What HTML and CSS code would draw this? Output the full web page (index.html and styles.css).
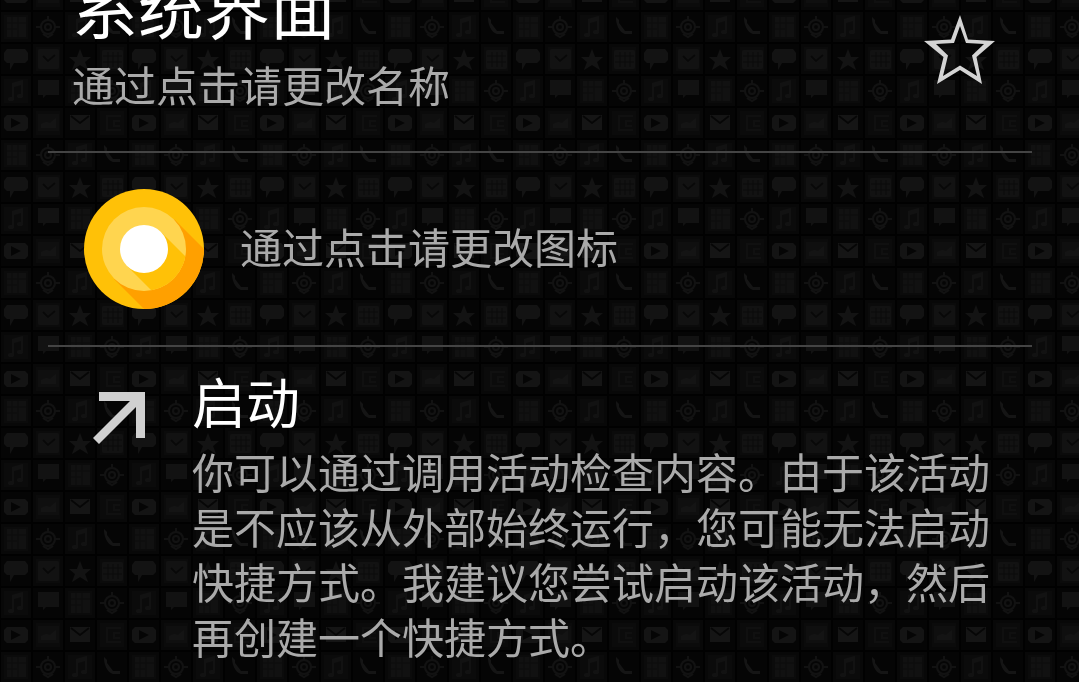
FILE: index.html
```html
<!DOCTYPE html>
<html lang="zh-CN">
<head>
<meta charset="utf-8">
<title>系统界面</title>
<link rel="stylesheet" href="styles.css">
</head>
<body>
<svg class="wallpaper" aria-hidden="true">
  <defs>
    <g id="cell"><rect x="1" y="1" width="30" height="30" fill="#080808"/><rect x="4" y="4" width="24" height="24" fill="#0b0b0b"/></g>
    <g id="dim"><rect x="1" y="1" width="30" height="30" fill="#050505"/></g>
    <g id="note" fill="#121212"><path d="M12 8l11-3v15h-2V10l-7 2v12h-2z"/><ellipse cx="11" cy="24" rx="3" ry="2"/><ellipse cx="20" cy="21" rx="3" ry="2"/></g>
    <g id="target" fill="none" stroke="#121212" stroke-width="2"><circle cx="16" cy="16" r="7"/><circle cx="16" cy="16" r="3"/><path d="M4 16h5M23 16h5M16 5v4M11 23l5 3 5-3"/></g>
    <g id="sheet"><rect x="7" y="6" width="19" height="20" fill="#111"/><path d="M7 12h19M7 18h10M12 6v20M18 6v20" stroke="#0b0b0b"/></g>
    <pattern id="tiles" width="128" height="128" y="43" patternUnits="userSpaceOnUse">
      <rect width="128" height="128" fill="#010101"/>
      <use href="#dim"/><path d="M7 6h18l3 4v7l-3 3H14l-4 7v-7H7l-3-3v-7z" fill="#131313"/>
      <use href="#cell" x="32"/><rect x="38" y="6" width="21" height="20" rx="2" fill="#121212"/><path d="M43 13l5 5 7-6" fill="none" stroke="#080808" stroke-width="2"/>
      <use href="#dim" x="64"/><path d="M80 6l3 8h8l-6 5 3 8-8-5-8 5 3-8-6-5h8z" fill="#131313"/>
      <use href="#cell" x="96"/><rect x="102" y="7" width="21" height="19" rx="2" fill="#121212"/><path d="M103 13h19M103 19h19M108 9v15M113 9v15M118 9v15" stroke="#0a0a0a"/>
      <use href="#cell" y="32"/><use href="#note" y="32"/>
      <use href="#dim" x="32" y="32"/><path d="M38 37h21v15H46l-3 3v-3h-5z" fill="#121212"/>
      <use href="#cell" x="64" y="32"/><use href="#sheet" x="64" y="32"/>
      <use href="#dim" x="96" y="32"/><use href="#target" x="96" y="32"/>
      <use href="#dim" y="64"/><path fill-rule="evenodd" d="M7 72h18l3 3v10l-3 3H7l-3-3V75zM11 75v10l10-5z" fill="#141414"/>
      <use href="#cell" x="32" y="64"/><path d="M38 71h21v17H38z" fill="#0f0f0f"/><path d="M41 85v-4l5-2 4 1 6-5v10z" fill="#141414"/>
      <use href="#dim" x="64" y="64"/><path d="M70 72h20v15H70z" fill="#151515"/><path d="M71 73l9 7 9-7" fill="none" stroke="#060606" stroke-width="2"/>
      <use href="#cell" x="96" y="64"/><path d="M121 73h-14v14h14M120 78h-6v5h6" fill="none" stroke="#101010" stroke-width="2"/>
      <use href="#cell" y="96"/><use href="#sheet" y="96"/>
      <use href="#dim" x="32" y="96"/><use href="#target" x="32" y="96"/>
      <use href="#cell" x="64" y="96"/><use href="#note" x="64" y="96"/>
      <use href="#dim" x="96" y="96"/><path d="M104 102l3 3v3l6 8h7v3h-7c-6-2-9-9-9-17z" fill="#151515"/>
    </pattern>
  </defs>
  <rect width="100%" height="100%" fill="url(#tiles)"/>
</svg>
<main class="page">
  <header class="row header">
    <button class="name" type="button">
      <span class="title">系统界面</span>
      <span class="hint">通过点击请更改名称</span>
    </button>
    <button class="star" type="button" aria-label="收藏">
      <svg width="72" height="72" viewBox="0 0 72 72" fill="#d4d4d4" fill-rule="evenodd"><path d="M36 1l8 24.500 27 1.500-18.500 16L58 70 36 56 13 70l6.500-27L0 27l27-1.500zM36 12l-6 17-18 1 12 11.500L19 62l17-10.500L53 62l-5-20.500L60 30l-18-1z"/></svg>
    </button>
  </header>
  <button class="row icon-row" type="button">
    <svg width="120" height="120" viewBox="0 0 120 120" aria-hidden="true">
      <defs><clipPath id="disc"><circle cx="60" cy="60" r="60"/></clipPath><clipPath id="ring"><circle cx="60" cy="60" r="42"/></clipPath></defs>
      <circle cx="60" cy="60" r="60" fill="#ffc107"/>
      <path d="M90 30l60 60-60 60-60-60z" fill="#ffa000" clip-path="url(#disc)"/>
      <circle cx="60" cy="60" r="42" fill="#ffd54f"/>
      <path d="M77 43l60 60-34 34-60-60z" fill="#ffc107" clip-path="url(#ring)"/>
      <circle cx="60" cy="60" r="24" fill="#fff"/>
    </svg>
    <span class="hint">通过点击请更改图标</span>
  </button>
  <button class="row launch" type="button">
    <svg class="arrow" width="52" height="52" viewBox="0 0 52 52" fill="#d0d0d0" aria-hidden="true"><path d="M6 0h46v46h-9V15L6 52 0 46 37 9H6z"/></svg>
    <span class="launch-text">
      <span class="subtitle">启动</span>
      <span class="hint">你可以通过调用活动检查内容。由于该活动是不应该从外部始终运行，您可能无法启动快捷方式。我建议您尝试启动该活动，然后再创建一个快捷方式。</span>
    </span>
  </button>
</main>
</body>
</html>
```
FILE: styles.css
```css
* {
  box-sizing: border-box;
}

body {
  margin: 0;
  background: #030303;
  color: #fff;
  font-family: "Noto Sans CJK SC", sans-serif;
  font-weight: 400;
  overflow: hidden;
}

.wallpaper {
  position: fixed;
  inset: 0;
  width: 100%;
  height: 100%;
  z-index: -1;
}

button {
  padding: 0;
  border: 0;
  background: none;
  color: inherit;
  font: inherit;
  text-align: left;
  cursor: pointer;
}

.page {
  display: flex;
  flex-direction: column;
  padding: 0 47px 0 48px;
}

.row {
  display: flex;
  width: 100%;
}

.header {
  justify-content: space-between;
  align-items: flex-start;
  margin-top: -28px;
  padding: 0 36px 40px 24px;
  border-bottom: 2px solid #444;
}

.name,
.launch-text {
  display: flex;
  flex-direction: column;
}

.title {
  font-size: 66px;
  line-height: 66px;
  margin-bottom: 18px;
}

.hint {
  color: #aaa;
  font-size: 42px;
  line-height: 55px;
}

.star {
  margin-top: 42px;
}

.star svg {
  display: block;
}

.icon-row {
  align-items: center;
  gap: 36px;
  padding: 36px;
  border-bottom: 2px solid #444;
}

.icon-row .hint {
  padding-bottom: 8px;
}

.launch {
  align-items: flex-start;
  gap: 47px;
  padding: 20px 36px 16px 45px;
}

.arrow {
  flex: none;
  margin-top: 25px;
}

.subtitle {
  font-size: 54px;
  line-height: 68px;
  margin-bottom: 8px;
}
```
